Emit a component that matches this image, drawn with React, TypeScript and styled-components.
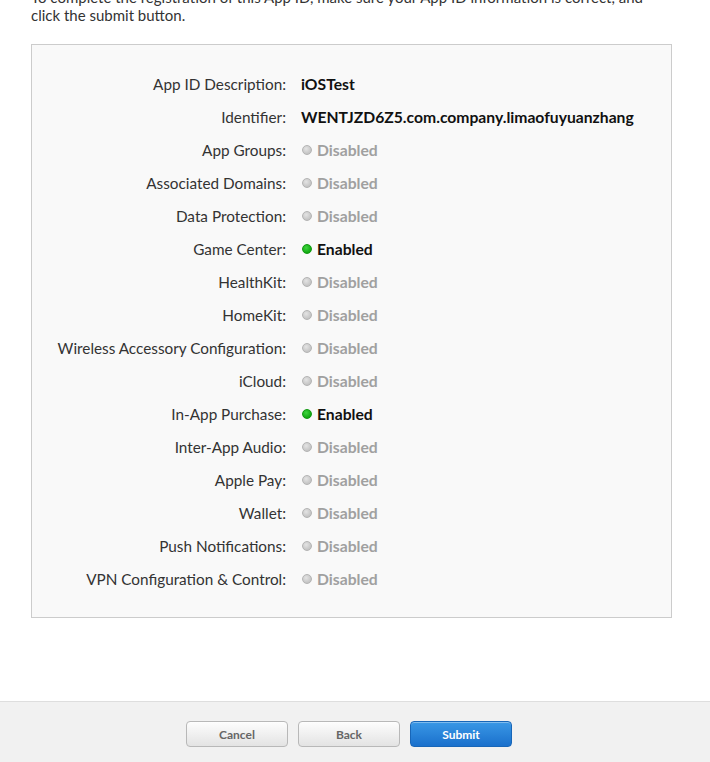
import React from "react";
import styled, { createGlobalStyle } from "styled-components";

type Row = { label: string; value: string; kind?: "text" | "on" | "off" };

const rows: Array<Row> = [
  { label: "App ID Description:", value: "iOSTest" },
  { label: "Identifier:", value: "WENTJZD6Z5.com.company.limaofuyuanzhang" },
  { label: "App Groups:", value: "Disabled", kind: "off" },
  { label: "Associated Domains:", value: "Disabled", kind: "off" },
  { label: "Data Protection:", value: "Disabled", kind: "off" },
  { label: "Game Center:", value: "Enabled", kind: "on" },
  { label: "HealthKit:", value: "Disabled", kind: "off" },
  { label: "HomeKit:", value: "Disabled", kind: "off" },
  { label: "Wireless Accessory Configuration:", value: "Disabled", kind: "off" },
  { label: "iCloud:", value: "Disabled", kind: "off" },
  { label: "In-App Purchase:", value: "Enabled", kind: "on" },
  { label: "Inter-App Audio:", value: "Disabled", kind: "off" },
  { label: "Apple Pay:", value: "Disabled", kind: "off" },
  { label: "Wallet:", value: "Disabled", kind: "off" },
  { label: "Push Notifications:", value: "Disabled", kind: "off" },
  { label: "VPN Configuration & Control:", value: "Disabled", kind: "off" },
];

function App() {
  return (
    <>
      <GlobalStyle/>
      <Page>
        <Content>
          <Intro>
            To complete the registration of this App ID, make sure your App ID information is correct, and
            click the submit button.
          </Intro>
          <Panel>
            {rows.map(row => {
              return <React.Fragment key={row.label}>
                <Label>{row.label}</Label>
                <Value $kind={row.kind || "text"}>
                  {row.kind && <Dot $on={row.kind === "on"}/>}
                  {row.value}
                </Value>
              </React.Fragment>
            })}
          </Panel>
        </Content>
        <Footer>
          <Button>Cancel</Button>
          <Button>Back</Button>
          <Button $primary>Submit</Button>
        </Footer>
      </Page>
    </>
  );
}

const GlobalStyle = createGlobalStyle`
  html, body {
    margin: 0;
    padding: 0;
    background: #fff;
  }

  body {
    font-family: Lato, "Liberation Sans", sans-serif;
    color: #333;
  }
`

const Page = styled.div`
  width: 710px;
  height: 762px;
  overflow: hidden;
  display: flex;
  flex-direction: column;
`

const Content = styled.div`
  flex: 1;
  padding: 0 38px 0 31px;
`

const Intro = styled.p`
  margin: -12px 0 0;
  font-size: 15px;
  line-height: 18px;
  color: #333;
`

const Panel = styled.div`
  margin-top: 20px;
  border: 1px solid #cccccc;
  background: #f9f9f9;
  padding: 22px 0 22px;
  display: grid;
  grid-template-columns: 254px 1fr;
  column-gap: 15px;
  grid-auto-rows: 33px;
  align-items: center;
`

const Label = styled.div`
  text-align: right;
  font-size: 15.3px;
  color: #333;
  white-space: nowrap;
`

const Value = styled.div<{ $kind: string }>`
  display: flex;
  align-items: center;
  font-size: 15.7px;
  font-weight: 700;
  white-space: nowrap;
  color: ${p => p.$kind === "off" ? "#a0a0a0" : "#111"};
`

const Dot = styled.span<{ $on: boolean }>`
  width: 10px;
  height: 10px;
  border-radius: 50%;
  margin: 0 5px 0 1px;
  box-sizing: border-box;
  background: ${p => p.$on
    ? "radial-gradient(circle at 40% 35%, #3fd63f, #12a812 70%)"
    : "radial-gradient(circle at 40% 35%, #e4e4e4, #c2c2c2 75%)"};
  border: 1px solid ${p => p.$on ? "#119a11" : "#b4b4b4"};
`

const Footer = styled.div`
  height: 61px;
  box-sizing: border-box;
  border-top: 1px solid #dedede;
  background: #f1f1f1;
  display: flex;
  align-items: flex-start;
  justify-content: center;
  gap: 10px;
  padding: 19px 12px 0 0;
`

const Button = styled.button<{ $primary?: boolean }>`
  width: 102px;
  height: 26px;
  border-radius: 4px;
  font-family: Lato, "Liberation Sans", sans-serif;
  font-size: 12px;
  font-weight: 700;
  cursor: pointer;
  color: ${p => p.$primary ? "#fff" : "#666"};
  border: 1px solid ${p => p.$primary ? "#1866b8" : "#b8b8b8"};
  background: ${p => p.$primary
    ? "linear-gradient(#3a98e6, #1a70cc)"
    : "linear-gradient(#fdfdfd, #e3e3e3)"};
  box-shadow: inset 0 1px 0 rgba(255, 255, 255, 0.35);
`

export default App;
